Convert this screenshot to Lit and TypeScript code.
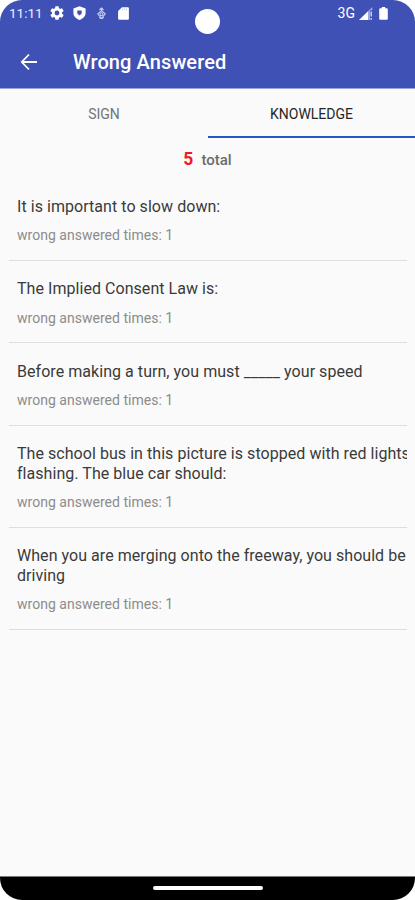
import { LitElement, html, css } from "lit";
import { customElement } from "lit/decorators.js";

const questions: string[][] = [
  ["It is important to slow down:"],
  ["The Implied Consent Law is:"],
  ["Before making a turn, you must _____ your speed"],
  ["The school bus in this picture is stopped with red lights", "flashing. The blue car should:"],
  ["When you are merging onto the freeway, you should be", "driving"],
];

@customElement("status-bar")
class StatusBar extends LitElement {
  static styles = css`
    :host { display: flex; align-items: center; height: 26px; padding: 0 27px 0 9px; color: #e9edff; position: relative; }
    .time { font-size: 13.5px; line-height: 26px; width: 34px; letter-spacing: 0; white-space: nowrap; font-weight: 400; }
    svg { display: block; fill: #fff; flex: none; }
    .gear { margin-left: 7px; }
    .shield { margin-left: 9px; }
    .debug { margin-left: 11px; }
    .card { margin-left: 12px; }
    .net { margin-left: auto; font-size: 14px; font-weight: 400; color: #fff; }
    .signal { margin-left: 4px; }
    .battery { margin-left: 6px; }
    .camera { position: absolute; left: 195px; top: 9px; width: 25px; height: 25px; border-radius: 50%; background: #fff; }
  `;
  render() {
    return html`
      <span class="time">11:11</span>
      <svg class="gear" width="14" height="14" viewBox="2 2 20 20"><path d="M19.14 12.94c.04-.3.06-.61.06-.94 0-.32-.02-.64-.07-.94l2.03-1.58a.49.49 0 0 0 .12-.61l-1.92-3.32a.49.49 0 0 0-.59-.22l-2.39.96c-.5-.38-1.03-.7-1.62-.94l-.36-2.54a.48.48 0 0 0-.48-.41h-3.84a.47.47 0 0 0-.47.41l-.36 2.54c-.59.24-1.13.57-1.62.94l-2.39-.96a.48.48 0 0 0-.59.22L2.74 8.87a.48.48 0 0 0 .12.61l2.03 1.58c-.05.3-.09.63-.09.94s.02.64.07.94l-2.03 1.58a.49.49 0 0 0-.12.61l1.92 3.32c.12.22.37.29.59.22l2.39-.96c.5.38 1.03.7 1.62.94l.36 2.54c.05.24.24.41.48.41h3.84c.24 0 .44-.17.47-.41l.36-2.54c.59-.24 1.13-.56 1.62-.94l2.39.96c.22.08.47 0 .59-.22l1.92-3.32a.48.48 0 0 0-.12-.61zM12 15.4a3.4 3.4 0 1 1 0-6.8 3.4 3.4 0 0 1 0 6.8z"/></svg>
      <svg class="shield" width="13" height="14" viewBox="0 0 13 14"><path fill-rule="evenodd" d="M6.5.2 12.6 2.6V7c0 3.2-2.6 5.900-6.100 6.900C3 12.900.4 10.200.4 7V2.600zM6.500 9.500 8.700 7.600V4.600H4.300V7.600z"/></svg>
      <svg class="debug" width="9" height="13" viewBox="0 0 9 13"><g fill="none" stroke="#cbd2f5" stroke-width="1.1"><path d="M2.500 3 4.500 1l2 2M4.500 1v3M.7 6.800 4.500 3.600l3.800 3.200L4.500 11.500z"/><circle cx="4.500" cy="7.300" r="1.500"/><path d="M2.300 10.300q2.200 2.400 4.400 0"/></g></svg>
      <svg class="card" width="11" height="13" viewBox="0 0 11 13"><path d="M4 .2h5.800q1.100 0 1.100 1.100v10.400q0 1.100-1.100 1.100H1.200q-1.100 0-1.100-1.100V4z"/><path fill="#c5cbee" d="M4.100 1.600h1v1.600h-1zM6.100 1.600h1v1.600h-1zM8.100 1.600h1v1.600h-1z"/></svg>
      <span class="net">3G</span>
      <svg class="signal" width="14" height="13" viewBox="0 0 14 13"><path d="M0 13 9 4.200V13z"/><path fill="#9ca6df" d="M9 4.200 13.300 0v3.200H11v5.300H9zM9 8.500h2V13H9z"/><path d="M11.500 4.500h1.500v5h-1.500zM11.500 11h1.500v1.700h-1.500z" fill="#ccd2f2"/></svg>
      <svg class="battery" width="9" height="13" viewBox="0 0 9 13"><path d="M2.800 0h3.400v1.300h1.500q1.100 0 1.100 1.100v9.300q0 1.100-1.100 1.100H1.300Q.2 12.800.2 11.700V2.400q0-1.100 1.100-1.100h1.500z"/></svg>
      <i class="camera"></i>
    `;
  }
}

@customElement("question-row")
class QuestionRow extends LitElement {
  static properties = { lines: { attribute: false } };
  declare lines: string[];
  static styles = css`
    :host { display: block; margin: 0 8px 0 9px; padding: 18.5px 0 16.7px 8px; border-bottom: 1px solid #dedede; overflow: hidden; }
    .q { font-size: 16px; line-height: 19.3px; color: #3a3a3a; white-space: nowrap; letter-spacing: 0.05px; }
    .t { font-size: 14px; line-height: 16px; margin-top: 11px; color: #8c8c8c; letter-spacing: 0.02px; }
  `;
  render() {
    return html`
      ${this.lines.map((l) => html`<div class="q">${l}</div>`)}
      <div class="t">wrong answered times: 1</div>
    `;
  }
}

@customElement("app-root")
class AppRoot extends LitElement {
  static styles = css`
    :host { display: block; height: 900px; background: #fff; font-family: Roboto, "Liberation Sans", sans-serif; }
    .phone { display: flex; flex-direction: column; height: 900px; border-radius: 22px; overflow: hidden; background: #fafafa; }
    .head { height: 88px; background: #3f51b5; border-bottom: 1px solid #9ba4d6; flex: none; }
    .bar { display: flex; align-items: center; height: 62px; padding: 9px 0 0 20px; box-sizing: border-box; color: #fff; }
    .bar svg { display: block; fill: none; stroke: #fff; stroke-width: 1.8; }
    .title { margin-left: 35px; font-size: 20px; font-weight: 500; letter-spacing: 0.1px; }
    .tabs { display: grid; grid-template-columns: 208px 207px; height: 49px; flex: none; }
    .tab { display: flex; align-items: center; justify-content: center; font-size: 14px; color: #737373; box-sizing: border-box; padding-top: 2px; border-bottom: 2px solid transparent; }
    .on { color: #262626; border-bottom-color: #2457c5; }
    .total { display: flex; justify-content: center; align-items: baseline; gap: 8px; height: 40.5px; line-height: 43px; font-size: 15px; font-weight: 500; color: #6c6c6c; flex: none; }
    .n { color: #ef1a22; font-size: 17.5px; font-weight: 700; }
    .list { flex: 1; }
    .nav { height: 23px; flex: none; background: #000; border-top: 1px solid #777; display: flex; justify-content: center; }
    .pill { width: 110px; height: 4px; border-radius: 2px; background: #fff; margin-top: 9px; }
  `;
  render() {
    return html`
      <div class="phone">
        <div class="head">
          <status-bar></status-bar>
          <div class="bar">
            <svg width="18" height="18" viewBox="0 0 18 18"><path d="M17 9H2.500M9 1.500 1.800 9 9 16.500"/></svg>
            <span class="title">Wrong Answered</span>
          </div>
        </div>
        <div class="tabs"><div class="tab">SIGN</div><div class="tab on">KNOWLEDGE</div></div>
        <div class="total"><span class="n">5</span><span>total</span></div>
        <div class="list">${questions.map((q) => html`<question-row .lines=${q}></question-row>`)}</div>
        <div class="nav"><div class="pill"></div></div>
      </div>
    `;
  }
}
